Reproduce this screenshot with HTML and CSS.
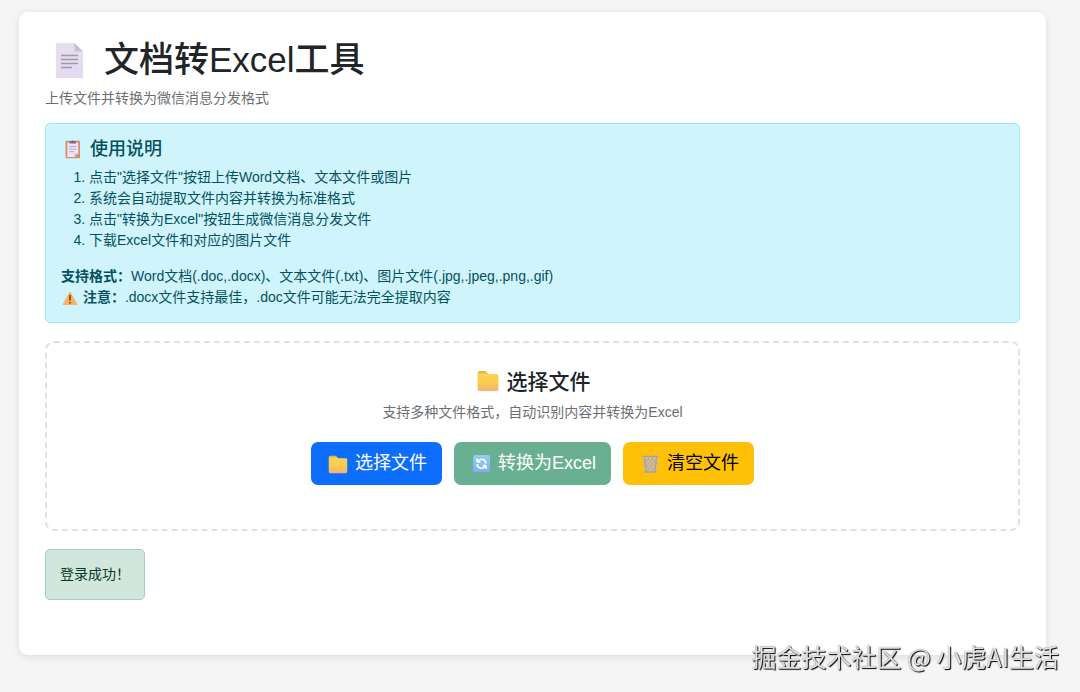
FILE: index.html
```
<!DOCTYPE html>
<html lang="zh-CN">
<head>
<meta charset="UTF-8">
<meta name="viewport" content="width=device-width, initial-scale=1">
<title>文档转Excel工具</title>
<link rel="stylesheet" href="styles.css">
</head>
<body>
<svg class="defs" width="0" height="0" aria-hidden="true">
  <defs>
    <linearGradient id="folder-fill" x1="0" y1="0" x2="0" y2="1">
      <stop offset="0" stop-color="#fbd352"/>
      <stop offset=".6" stop-color="#fbc850"/>
      <stop offset="1" stop-color="#f3b079"/>
    </linearGradient>
    <linearGradient id="page-fill" x1="0" y1="0" x2="0" y2="1">
      <stop offset="0" stop-color="#e5e0ec"/>
      <stop offset="1" stop-color="#e3d9f3"/>
    </linearGradient>
    <linearGradient id="sync-fill" x1="0" y1="0" x2="0" y2="1">
      <stop offset="0" stop-color="#8ed0f4"/>
      <stop offset="1" stop-color="#84aaf2"/>
    </linearGradient>
    <symbol id="folder" viewBox="0 0 24 24">
      <path d="M2 3.8Q2 2 3.8 2H9.5L13 5H2z" fill="#e9b93d"/>
      <path d="M2 4.2H10.2L12.4 4.9H20.4Q22 4.9 22 6.5V19.4Q22 21 20.4 21H3.6Q2 21 2 19.4z" fill="url(#folder-fill)"/>
    </symbol>
  </defs>
</svg>

<main class="card">
  <header class="page-header">
    <h1 class="page-title">
      <svg class="icon-title" viewBox="0 0 49 42" aria-hidden="true">
        <path d="M11 4H29.500L38 12.500V39H11z" fill="url(#page-fill)"/>
        <path d="M29.500 4L38 12.500H29.500z" fill="#c6c0cf"/>
        <path d="M16 16.500H33M16 20.500H33M16 24.500H33M16 28.500H27" stroke="#a196aa" stroke-width="1.500"/>
      </svg>
      文档转Excel工具
    </h1>
    <p class="subtitle">上传文件并转换为微信消息分发格式</p>
  </header>

  <section class="guide">
    <h2 class="guide-title">
      <svg class="icon" viewBox="0 0 24 24" aria-hidden="true">
        <rect x="3.500" y="2" width="16.500" height="20" rx="1" fill="#d78b68"/>
        <path d="M5.500 4H18V16.500L14 20.500H5.500z" fill="#eee5fa"/>
        <path d="M14 20.500V16.500H18z" fill="#c7b5cf"/>
        <path d="M8 5V2.500H10Q11.750 1 13.500 2.500H15.500V5z" fill="#7a6795"/>
        <path d="M7.500 8.500H16M7.500 11.500H16M7.500 14.500H13.500" stroke="#aa9bc0"/>
      </svg>
      使用说明
    </h2>
    <ol class="steps">
      <li>点击"选择文件"按钮上传Word文档、文本文件或图片</li>
      <li>系统会自动提取文件内容并转换为标准格式</li>
      <li>点击"转换为Excel"按钮生成微信消息分发文件</li>
      <li>下载Excel文件和对应的图片文件</li>
    </ol>
    <p class="note"><strong>支持格式：</strong>Word文档(.doc,.docx)、文本文件(.txt)、图片文件(.jpg,.jpeg,.png,.gif)</p>
    <p class="note">
      <svg class="icon-warning" viewBox="0 0 18 18" aria-hidden="true">
        <path d="M9 3L16 15.500H2z" fill="#f9b35e" stroke="#f9b35e" stroke-linejoin="round"/>
        <path d="M9 6V11.500M9 13V14.500" stroke="#5b4030" stroke-width="1.600"/>
      </svg>
      <strong>注意：</strong>.docx文件支持最佳，.doc文件可能无法完全提取内容</p>
  </section>

  <section class="upload">
    <h2 class="upload-title">
      <svg class="icon-large" viewBox="0 0 24 24" aria-hidden="true"><use href="#folder" width="24" height="24"/></svg>
      选择文件
    </h2>
    <p class="upload-hint">支持多种文件格式，自动识别内容并转换为Excel</p>
    <div class="actions">
      <button class="btn btn-primary" type="button">
        <svg class="icon" viewBox="-1 -2 26 26" aria-hidden="true"><use href="#folder" width="24" height="24"/></svg>
        选择文件
      </button>
      <button class="btn btn-success" type="button" disabled>
        <svg class="icon" viewBox="0 0 24 24" aria-hidden="true">
          <rect x="4" y="3" width="17" height="17" rx="2" fill="url(#sync-fill)"/>
          <path d="M8 10V6.500M8 10H11.500M8.500 9.500Q11 6.500 14 7.500Q17 8.500 16.800 11.500M17 13.500V17M17 13.500H13.500M16.500 14Q14 17 11 16Q8.200 15 8.200 12" fill="none" stroke="#fff" stroke-width="1.700"/>
        </svg>
        转换为Excel
      </button>
      <button class="btn btn-warning" type="button">
        <svg class="icon" viewBox="0 0 24 24" aria-hidden="true">
          <path d="M4.500 4H20.500L18.500 20.500H6.500z" fill="#d3bd98"/>
          <path d="M6 6L16 19M10 6L18 16M14 6L19 12M6.500 11L13 20M19 6L9 19M15 6L7 16M11 6L6 12M18.500 12L13 20" stroke="#b3a48e" stroke-width=".7"/>
          <path d="M4.500 4.500H20.500M6.500 20H18.500M6.500 6L8 19.500M18.500 6L17 19.500" stroke="#aaa097" stroke-width="1.300"/>
        </svg>
        清空文件
      </button>
    </div>
  </section>

  <div class="status" role="status">登录成功！</div>
</main>

<div class="watermark">掘金技术社区 @ 小虎AI生活</div>
</body>
</html>
```
FILE: styles.css
```
* {
  box-sizing: border-box;
}

body {
  margin: 0;
  padding: 12px 34px 36px 19px;
  background: #f5f5f5;
  color: #212529;
  font-family: "Liberation Sans", "Noto Sans CJK SC", sans-serif;
  font-size: 14px;
  line-height: 21px;
}

h1, h2, p, ol {
  margin: 0;
}

.defs {
  position: absolute;
}

.card {
  padding: 26px 26px 55px;
  border-radius: 9px;
  background: #fff;
  box-shadow: 0 2px 9px rgba(0, 0, 0, 0.1);
}

.page-header {
  margin-bottom: 14px;
}

.page-title {
  display: flex;
  align-items: center;
  gap: 10px;
  margin-bottom: 6px;
  font-size: 35px;
  font-weight: 500;
  line-height: 44px;
}

.icon-title {
  flex: none;
  width: 49px;
  height: 42px;
}

.subtitle,
.upload-hint {
  color: #6c6f72;
}

.guide {
  margin-bottom: 18px;
  padding: 15px 15px 14px;
  border: 1px solid #9eeaf9;
  border-radius: 5px;
  background: #cff4fc;
  color: #055160;
}

.guide-title {
  display: flex;
  align-items: center;
  gap: 5px;
  margin-bottom: 7px;
  font-size: 18px;
  font-weight: 500;
  line-height: 21px;
}

.icon {
  flex: none;
  width: 24px;
  height: 24px;
}

.guide-title .icon {
  height: 21px;
}

.steps {
  margin-bottom: 15px;
  padding-left: 28px;
}

.icon-warning {
  width: 18px;
  height: 18px;
  vertical-align: middle;
}

.upload {
  margin-bottom: 18px;
  padding: 26px 26px 44px;
  border: 2px dashed #dee0e2;
  border-radius: 9px;
  text-align: center;
}

.upload-title {
  display: flex;
  align-items: center;
  justify-content: center;
  gap: 6px;
  margin-bottom: 8px;
  font-size: 21px;
  font-weight: 500;
  line-height: 25px;
}

.icon-large {
  flex: none;
  width: 26px;
  height: 25px;
}

.upload-hint {
  margin-bottom: 19px;
}

.actions {
  display: flex;
  flex-wrap: wrap;
  justify-content: center;
  gap: 12px;
}

.btn {
  display: flex;
  align-items: center;
  gap: 5px;
  padding: 8px 15px;
  border: 0;
  border-radius: 7px;
  font-family: inherit;
  font-size: 18px;
  line-height: 27px;
  cursor: pointer;
}

.btn-primary {
  background: #0d6efd;
  color: #fff;
}

.btn-success {
  background: #69b092;
  color: #fff;
  cursor: default;
}

.btn-warning {
  background: #ffc107;
  color: #000;
}

.status {
  width: fit-content;
  padding: 14px;
  border: 1px solid #a3cfbb;
  border-radius: 5px;
  background: #d1e7dd;
  color: #0a3622;
}

.watermark {
  position: fixed;
  right: 21px;
  bottom: 18px;
  color: #e0e0e0;
  font-family: "Noto Sans CJK SC", sans-serif;
  font-size: 25px;
  line-height: 36px;
  text-shadow: 1px 1px 1px #000, 0 0 1px #777;
  pointer-events: none;
}
```
